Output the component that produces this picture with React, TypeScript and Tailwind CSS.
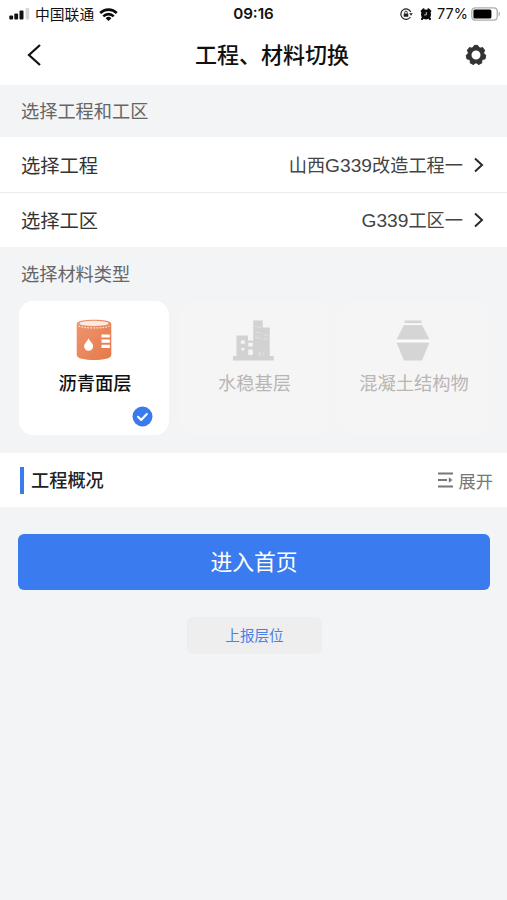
import type { ReactNode } from "react";

const gearTeeth = [0, 1, 2, 3, 4, 5, 6];

function SignalIcon() {
  return (
    <svg width="21" height="12" viewBox="0 0 21 12">
      <rect x="0.3" y="7.4" width="3.8" height="4.2" rx="1" fill="#111" />
      <rect x="5.3" y="5.4" width="3.8" height="6.2" rx="1" fill="#111" />
      <rect x="10.5" y="2.4" width="4" height="9.2" rx="1" fill="#111" />
      <rect x="16.6" y="0" width="3.6" height="11.6" rx="1" fill="#d6d6d6" />
    </svg>
  );
}

function WifiIcon() {
  return (
    <svg width="19" height="13" viewBox="0 0 19 13" fill="none" stroke="#0a0a0a" strokeWidth="2.6">
      <path d="M1.2 5a11.8 11.8 0 0 1 16.6 0" />
      <path d="M4.3 8.3a7.4 7.4 0 0 1 10.4 0" />
      <path d="m9.5 13-2.9-2.8a4.2 4.2 0 0 1 5.8 0Z" fill="#0a0a0a" stroke="none" />
    </svg>
  );
}

function RotationLockIcon() {
  return (
    <svg width="13" height="12" viewBox="0 0 13 12" fill="none" stroke="#222">
      <path d="M10.8 4A5.2 5.2 0 1 0 10.4 9" strokeWidth="1.2" />
      <path d="M9.2 5.2h3.6L11 7.8Z" fill="#222" stroke="none" />
      <rect x="3.7" y="5.4" width="4.6" height="3.3" rx="0.5" fill="#222" stroke="none" />
      <path d="M4.7 5.6V4.4a1.3 1.3 0 0 1 2.6 0v1.2" strokeWidth="0.9" />
    </svg>
  );
}

function AlarmIcon() {
  return (
    <svg width="12" height="12" viewBox="0 0 12 12">
      <circle cx="6" cy="6.4" r="5" fill="#0a0a0a" />
      <path d="M1.7 3.2 3.6 1.3M10.3 3.2 8.4 1.3M2 11l1.3-1.6M10 11 8.7 9.4" stroke="#0a0a0a" strokeWidth="2" strokeLinecap="round" />
      <path d="M6.3 4v2.9H4.2" fill="none" stroke="#ddd" strokeWidth="0.9" />
    </svg>
  );
}

function BatteryIcon() {
  return (
    <svg width="30" height="14" viewBox="0 0 30 14">
      <rect x="0.8" y="0.8" width="25.4" height="12.4" rx="3.4" fill="#fff" stroke="#adadad" strokeWidth="1.3" />
      <rect x="2.4" y="2.4" width="18" height="9.2" rx="1.6" fill="#000" />
      <path d="M27.6 4.8c1.9.5 1.9 3.900 0 4.400Z" fill="#adadad" />
    </svg>
  );
}

function GearIcon() {
  return (
    <svg width="22" height="22" viewBox="-11 -11 22 22" fill="none" stroke="#333435">
      <circle r="6.5" strokeWidth="4" />
      {gearTeeth.map((i) => (
        <path
          key={i}
          d="M-2.7-7.3-1.8-9.6H1.8L2.7-7.3Z"
          fill="#333435"
          strokeWidth="1"
          strokeLinejoin="round"
          transform={`rotate(${(i * 360) / 7})`}
        />
      ))}
    </svg>
  );
}

function Chevron() {
  return (
    <svg width="10" height="16" viewBox="0 0 10 16" fill="none" stroke="#2b2b2b" strokeWidth="2">
      <path d="m1 1.5 7 6.5-7 6.5" />
    </svg>
  );
}

function AsphaltIcon() {
  return (
    <svg width="36" height="42" viewBox="0 0 36 42">
      <defs>
        <linearGradient id="barrel" x1="0" y1="0" x2="1" y2="1">
          <stop offset="0" stopColor="#ee9670" />
          <stop offset="1" stopColor="#e6794a" />
        </linearGradient>
      </defs>
      <path d="M.7 5c0-3 7.3-4.3 17.3-4.3S35.3 2 35.3 5v31c0 3.6-8.3 5-17.3 5S.7 39.6.7 36Z" fill="url(#barrel)" />
      <ellipse cx="18" cy="4.4" rx="14.5" ry="2.7" fill="#fbeae2" />
      <path d="M2.5 7c5 2.6 26 2.6 31 0" fill="none" stroke="#fbe0d4" strokeWidth="1.3" strokeDasharray="1.8 1.2" />
      <path d="M12.6 19.2c1.5 3.3 4.5 5.3 4.5 8.1a4.5 4.5 0 0 1-9 0c0-2.8 3-4.8 4.5-8.1Z" fill="#fff" />
      <path d="M25.5 17h8.3M25.5 22.2h8.3M25.5 27.4h8.3" stroke="#fff" strokeWidth="3.2" />
    </svg>
  );
}

function BuildingIcon() {
  return (
    <svg width="41" height="41" viewBox="0 0 41 41">
      <path d="M0 36h3.500V15.500H15v5h5.300V.5h9.400v7h7V36h4v4.500H0Z" fill="#d2d2d2" />
      <path d="M7.800 20.500h4v3.200h-4ZM7.800 28h4l-2 3.200ZM15.300 22.800h4.500v3.700h-4.500ZM15.300 29.500h4.500V35h-4.500Z" fill="#f5f5f5" />
      <path d="M22 6.500l6 1M22 12l6 1M30 14.500l5 1M22 17.500l6 1M30 19.500l4-1M25.500 36l1.300-4 1.200 4M30 36l1.700-5" fill="none" stroke="#e2e2e2" />
    </svg>
  );
}

function ConcreteIcon() {
  return (
    <svg width="34" height="41" viewBox="0 0 34 41">
      <path d="M8.500 3h17v2.500h-17ZM.5 19h33v4H.5Z" fill="#fbfbfb" />
      <path d="M8.500.5h17v2.700h-17ZM8 5h18l7.500 14.500H.5ZM.5 22.500h33L26 40.500H8Z" fill="#d5d5d5" />
    </svg>
  );
}

function SelectRow({ label, children }: { label: string; children: ReactNode }) {
  return (
    <div className="flex flex-1 items-center justify-between pl-[21px] pr-[23px]">
      <span className="pt-[5px] text-[19.3px]">{label}</span>
      <span className="flex items-center gap-[11px] text-[18.2px] text-[#444]">
        <span className="pt-[3px]">{children}</span>
        <Chevron />
      </span>
    </div>
  );
}

function MaterialCard({ name, icon, active = false }: { name: string; icon: ReactNode; active?: boolean }) {
  return (
    <div
      className={
        active
          ? "relative flex h-[134px] w-[150px] flex-col items-center rounded-[14px] bg-white pt-[18px] font-medium text-[#111]"
          : "relative flex h-[134px] w-[150px] flex-col items-center rounded-[14px] bg-[#f5f5f5] pt-[18px] text-[#b9b5b4]"
      }
    >
      <div className="flex h-[42px] items-center">{icon}</div>
      <span className="mt-[9px] whitespace-nowrap pl-[2px] text-[18.3px] leading-7">{name}</span>
      {active && (
        <svg className="absolute bottom-2 right-4" width="21" height="21" viewBox="0 0 21 21" fill="none">
          <circle cx="10.5" cy="10.5" r="10" fill="#397bee" />
          <path d="m6 10.8 3.2 3.1 5.6-5.8" stroke="#fff" strokeWidth="2.2" strokeLinecap="round" strokeLinejoin="round" />
        </svg>
      )}
    </div>
  );
}

export default function App() {
  return (
    <div className="flex h-[900px] w-[507px] flex-col bg-[#f2f4f6] font-['Liberation_Sans','Noto_Sans_CJK_SC',sans-serif] text-[#333]">
      <header className="h-[85px] bg-white">
        <div className="grid h-7 grid-cols-3 items-center px-[8px] text-[#111]">
          <div className="flex items-center gap-[5px] pl-px">
            <SignalIcon />
            <span className="pt-[2px] text-[14.8px]">中国联通</span>
            <WifiIcon />
          </div>
          <span className="text-center font-['Inter',sans-serif] text-[15.2px] font-semibold">09:16</span>
          <div className="-mr-[2px] flex items-center justify-end">
            <RotationLockIcon />
            <span className="ml-[7px] mr-[5px]"><AlarmIcon /></span>
            <span className="mr-[3px] font-['Inter',sans-serif] text-[14.5px]">77%</span>
            <BatteryIcon />
          </div>
        </div>
        <div className="grid h-[54px] grid-cols-[1fr_auto_1fr] items-center pl-[27px] pr-[20px]">
          <svg width="15" height="22" viewBox="0 0 15 22" fill="none" stroke="#111" strokeWidth="2.2">
            <path d="M13 1 2 11l11 10" />
          </svg>
          <h1 className="pl-[30px] text-[22px] font-medium text-[#111]">工程、材料切换</h1>
          <div className="justify-self-end">
            <GearIcon />
          </div>
        </div>
      </header>

      <div className="flex h-[52px] items-center pl-[21px] pt-[4px] text-[18.2px] text-[#666]">选择工程和工区</div>
      <div className="flex h-[110px] flex-col divide-y divide-[#e9ebec] bg-white pt-px">
        <SelectRow label="选择工程">
          山西<span className="text-[19.2px]">G339</span>改造工程一
        </SelectRow>
        <SelectRow label="选择工区">
          <span className="text-[19.2px]">G339</span>工区一
        </SelectRow>
      </div>

      <div className="flex h-[54px] items-center pl-[21px] pt-[3px] text-[18.2px] text-[#666]">选择材料类型</div>
      <div className="flex justify-between px-[19px]">
        <MaterialCard name="沥青面层" icon={<AsphaltIcon />} active />
        <MaterialCard name="水稳基层" icon={<BuildingIcon />} />
        <MaterialCard name="混凝土结构物" icon={<ConcreteIcon />} />
      </div>

      <div className="mt-[18px] flex h-[54px] items-center bg-white pl-[20px] pr-[14px]">
        <div className="h-[27px] w-1 bg-[#397bee]" />
        <span className="ml-[7px] pt-[4px] text-[18.2px] font-medium text-[#222]">工程概况</span>
        <div className="ml-auto flex items-center gap-[5px] text-[17.3px] text-[#777]">
          <svg width="15" height="16" viewBox="0 0 15 16" fill="none" stroke="#777" strokeWidth="2.1">
            <path d="M0 1.5h15M0 8h9M0 14.5h15" />
            <path d="M10.8 5.3 14.5 8l-3.7 2.7Z" fill="#777" stroke="none" />
          </svg>
          <span className="pt-[5px]">展开</span>
        </div>
      </div>

      <button type="button" className="ml-[18px] mt-[27px] h-[56px] w-[472px] rounded-[6px] bg-[#3a7bf0] pt-[3px] text-[21.8px] text-white">
        进入首页
      </button>
      <button type="button" className="ml-[187px] mt-[27px] h-[37px] w-[135px] rounded-[6px] bg-[#eeeeee] pt-[2px] text-[14.6px] text-[#4a7fe6]">
        上报层位
      </button>
    </div>
  );
}
